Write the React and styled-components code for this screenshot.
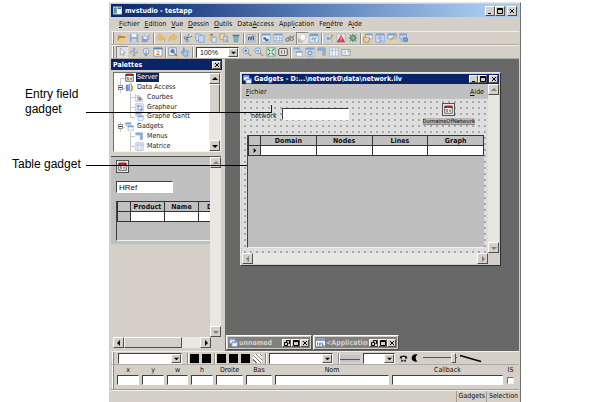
import React from "react";
import styled, { createGlobalStyle, css } from "styled-components";

const face = "#d4d0c8";
const gray = "#c0c0c0";
const navy = "#0a246a";
const uiFont = `"DejaVu Sans Condensed", "DejaVu Sans", sans-serif`;

const GlobalStyle = createGlobalStyle`
  *, *::before, *::after { box-sizing: border-box; }
  body { margin: 0; background: #fff; }
  button, input, select { font: inherit; color: inherit; margin: 0; padding: 0; border-radius: 0; min-width: 0; }
  svg { display: block; flex: none; }
`;

const raised = css`
  border: 1px solid;
  border-color: #fff #505050 #505050 #fff;
`;
const sunken = css`
  border: 1px solid;
  border-color: #707070 #f4f2ec #f4f2ec #707070;
`;

/* ---------- page ---------- */
const Page = styled.div`
  position: relative;
  display: grid;
  grid-template-columns: 109px minmax(0, 1fr) 83px;
  min-height: 100vh;
  font: 7px/10px ${uiFont};
  color: #111;
`;
const Notes = styled.aside`
  display: flex;
  flex-direction: column;
  gap: 40px;
  padding: 87px 0 0 12px;
  font: 12px/15px "Liberation Sans", Arial, sans-serif;
  color: #000;
`;
const Note = styled.p`
  margin: 0;
  padding-left: ${(p) => (p.$indent ? "13px" : "0")};
`;
const Leader = styled.span`
  position: absolute;
  z-index: 5;
  top: ${(p) => p.$top}px;
  left: 86px;
  width: ${(p) => p.$width}px;
  height: ${(p) => (p.$tick ? "8px" : "1px")};
  border-bottom: 1px solid #000;
  border-right: ${(p) => (p.$tick ? "1px solid #222" : "0")};
  pointer-events: none;
`;

/* ---------- application frame ---------- */
const Frame = styled.main`
  display: flex;
  flex-direction: column;
  min-width: 0;
  margin-top: 2px;
  padding: 1px 1px 0 2px;
  background: ${face};
  border-right: 1px solid #707070;
  border-top: 1px solid #e8e6e0;
`;
const TitleBar = styled.header`
  display: flex;
  align-items: center;
  gap: 3px;
  height: 13px;
  padding: 0 2px;
  color: #fff;
  background: linear-gradient(90deg, ${navy}, #5a7fb8 50%, #a6caf0 92%);
  font-weight: bold;
`;
const TitleText = styled.span`
  flex: 1;
  min-width: 0;
  overflow: hidden;
  white-space: nowrap;
`;
const WinButtons = styled.span`
  display: flex;
`;
const WinButton = styled.button`
  display: grid;
  place-items: center;
  width: ${(p) => (p.$big ? "10px" : "9px")};
  height: ${(p) => (p.$big ? "10px" : "8px")};
  margin-left: ${(p) => (p.$split ? "2px" : "0")};
  background: ${face};
  ${raised}
`;
const MenuBar = styled.nav`
  display: flex;
  align-items: center;
  justify-content: ${(p) => (p.$spread ? "space-between" : "flex-start")};
  gap: 5px;
  height: ${(p) => (p.$spread ? "15px" : "14px")};
  padding: ${(p) => (p.$spread ? "0 4px 0 4px" : "0 8px")};
  background: ${(p) => (p.$spread ? gray : face)};
`;
const MenuItem = styled.button`
  border: 0;
  background: none;
  white-space: nowrap;
`;
const Toolbar = styled.div`
  display: flex;
  align-items: center;
  height: 14px;
  padding-left: 5px;
  border-top: 1px solid #f0eee8;
  border-bottom: 1px solid #b0aca4;
  background: linear-gradient(90deg, transparent 1px, #fff 1px, #fff 2px, #8a8780 2px, #8a8780 3px, transparent 3px);
`;
const ToolButton = styled.button`
  display: grid;
  place-items: center;
  width: 12px;
  height: 12px;
  border: 0;
  background: ${(p) => (p.$on ? "#e6e4de" : "none")};
  box-shadow: ${(p) => (p.$on ? "inset 1px 1px #8a8780" : "none")};
`;
const Separator = styled.span`
  flex: none;
  width: 3px;
  height: 11px;
  background: linear-gradient(90deg, transparent 1px, #8f8c85 1px, #8f8c85 2px, #fff 2px);
`;
const ComboBox = styled.span`
  position: relative;
  display: flex;
  flex: none;
  width: ${(p) => p.$width}px;
  height: 11px;
  margin: ${(p) => p.$margin || "0"};
  background: #fff;
  ${sunken}
  border-color: #404040 #fff #fff #404040;
`;
const ComboSelect = styled.select`
  flex: 1;
  appearance: none;
  border: 0;
  background: transparent;
  padding-left: 3px;
  font: 7px/9px "Liberation Sans", Arial, sans-serif;
`;
const ComboArrow = styled.span`
  position: absolute;
  right: 0;
  top: 0;
  bottom: 0;
  width: 10px;
  display: grid;
  place-items: center;
  background: ${face};
  pointer-events: none;
  ${raised}
`;

/* ---------- work area ---------- */
const Work = styled.div`
  flex: 1;
  display: grid;
  grid-template-columns: 111px minmax(0, 1fr);
  column-gap: 3px;
  min-height: 0;
`;
const Dock = styled.section`
  display: flex;
  flex-direction: column;
  min-width: 0;
  padding-bottom: 3px;
`;
const DockTitle = styled.div`
  display: flex;
  align-items: center;
  justify-content: space-between;
  height: 11px;
  padding: 0 1px 0 2px;
  color: #fff;
  background: ${navy};
  font-weight: bold;
`;
const TreeBox = styled.div`
  display: flex;
  height: 80px;
  margin: 2px 1px 4px 2px;
  background: #fff;
  ${sunken}
`;
const Tree = styled.ul`
  flex: 1;
  display: flex;
  flex-direction: column;
  margin: 0;
  padding: 0;
  list-style: none;
`;
const TreeRow = styled.li`
  position: relative;
  flex: 1;
  display: flex;
  align-items: center;
  gap: 2px;
  padding-left: ${(p) => (p.$level ? "21px" : "11px")};
  white-space: nowrap;
  &::before {
    content: "";
    position: absolute;
    left: ${(p) => (p.$level ? "16px" : "6px")};
    width: 5px;
    top: 50%;
    border-top: 1px solid #c8c8c8;
  }
  &::after {
    content: "";
    position: absolute;
    left: ${(p) => (p.$level ? "16px" : "6px")};
    top: ${(p) => (p.$first ? "50%" : "0")};
    bottom: ${(p) => (p.$last ? "50%" : "0")};
    border-left: 1px solid #c8c8c8;
  }
`;
const TreeLabel = styled.span`
  padding: 0 1px;
  line-height: 9px;
  color: ${(p) => (p.$selected ? "#fff" : "#222")};
  background: ${(p) => (p.$selected ? navy : "transparent")};
`;
const Expander = styled.button`
  position: absolute;
  z-index: 1;
  left: 4px;
  width: 5px;
  height: 5px;
  border: 1px solid #909090;
  background: linear-gradient(#fff 1px, #333 1px, #333 2px, #fff 2px);
`;
const ScrollColumn = styled.div`
  display: flex;
  flex-direction: column;
  flex: none;
  width: 11px;
  background: #e9e7e1;
`;
const ScrollRow = styled.div`
  display: flex;
  height: 11px;
  background: #e9e7e1;
`;
const ScrollButton = styled.button`
  display: grid;
  place-items: center;
  flex: none;
  width: 11px;
  height: 11px;
  background: ${face};
  ${raised}
`;
const Thumb = styled.span`
  flex: ${(p) => p.$grow};
  background: ${face};
  ${raised}
`;
const Spacer = styled.span`
  flex: 1;
`;
const Preview = styled.div`
  flex: 1;
  display: flex;
  min-height: 0;
  margin-right: 1px;
  border-top: 1px solid #505050;
`;
const PreviewBody = styled.div`
  flex: 1;
  min-width: 0;
  overflow: hidden;
`;
const PreviewPane = styled.div`
  display: flex;
  flex-direction: column;
  gap: 8px;
  overflow: hidden;
  height: 87px;
  padding: 3px 0 3px 5px;
  background: ${gray};
`;
const GadgetButton = styled.button`
  display: grid;
  place-items: center;
  flex: none;
  width: 13px;
  height: 13px;
  border: 1px solid #505050;
  background: #e4e4e4;
`;
const Field = styled.input`
  flex: none;
  width: ${(p) => (p.$width ? p.$width + "px" : "100%")};
  height: ${(p) => (p.$short ? "10px" : "12px")};
  padding-left: 2px;
  background: #fff;
  border: 1px solid;
  border-color: #404040 #fff #fff #404040;
  font: 8px/9px "Liberation Sans", Arial, sans-serif;
`;
const GridPane = styled.div`
  flex: 1;
  overflow: hidden;
  background: #bebebe;
  border-left: 1px solid #404040;
  border-bottom: 1px solid #f0f0f0;
`;
const Grid = styled.table`
  table-layout: fixed;
  width: ${(p) => (p.$width ? p.$width + "px" : "100%")};
  border-collapse: collapse;
  th, td {
    height: 10px;
    padding: 0;
    border: 1px solid #333;
    line-height: 8px;
  }
  th { background: ${gray}; font-weight: bold; }
  td { background: #fff; }
  th:first-child { width: ${(p) => (p.$width ? "13px" : "12px")}; }
  td:first-child { background: ${gray}; }
  svg { margin: auto; }
`;

/* ---------- child windows ---------- */
const Desktop = styled.section`
  display: flex;
  flex-direction: column;
  justify-content: space-between;
  min-width: 0;
  padding-bottom: 1px;
  background: #686868;
`;
const Child = styled.section`
  display: flex;
  flex-direction: column;
  min-height: 194px;
  margin: 13px 18px 0 15px;
  padding: 1px;
  background: ${face};
  border: 1px solid;
  border-color: #e8e6e0 #303030 #303030 #e8e6e0;
`;
const ChildTitle = styled.header`
  display: flex;
  align-items: center;
  gap: ${(p) => (p.$small ? "1px" : "2px")};
  height: ${(p) => (p.$small ? "11px" : "10px")};
  padding: 0 1px;
  color: ${(p) => (p.$small ? face : "#fff")};
  background: ${(p) => (p.$small ? "#808080" : navy)};
  font-weight: bold;
`;
const ChildBody = styled.div`
  flex: 1;
  display: flex;
`;
const ChildContent = styled.div`
  flex: 1;
  min-width: 0;
  display: flex;
  flex-direction: column;
`;
const Canvas = styled.div`
  flex: 1;
  display: flex;
  flex-direction: column;
  padding: 4px 4px 5px 5px;
  background: #dedede radial-gradient(circle at 3px 3px, #a8a8a8 0 1px, transparent 1px) 0 0 / 6px 6px;
`;
const CanvasForm = styled.div`
  display: flex;
  justify-content: space-between;
  align-items: flex-start;
  height: 32px;
  padding: 0 9px 0 4px;
`;
const FieldLabel = styled.label`
  display: flex;
  align-items: flex-end;
  gap: 5px;
  padding-top: 5px;
  line-height: 8px;
`;
const Domain = styled.figure`
  display: flex;
  flex-direction: column;
  align-items: center;
  gap: 2px;
  margin: 0;
`;
const DomainName = styled.figcaption`
  background: #b8b8b8;
  border-bottom: 1px solid #888;
  font: 6px/6px Roboto, "Liberation Sans", sans-serif;
`;
const HRow = styled.div`
  display: flex;
`;
const Corner = styled.span`
  width: 11px;
  height: 11px;
  background: ${face};
`;
const Minimized = styled.div`
  display: flex;
  gap: 1px;
  padding-left: 1px;
`;
const MinWindow = styled.section`
  width: 86px;
  padding: 1px;
  background: ${face};
  ${raised}
`;

/* ---------- bottom bars ---------- */
const Swatch = styled.button`
  width: 9px;
  height: 9px;
  margin: 0 2px 0 1px;
  border: 0;
  background: ${(p) => (p.$hatch ? "repeating-linear-gradient(45deg, #fff 0 2px, #777 2px 3px)" : "#000")};
`;
const Slider = styled.input`
  appearance: none;
  width: 34px;
  height: 12px;
  margin: 0 2px;
  background: linear-gradient(transparent 5px, #555 5px, #555 6px, transparent 6px);
  &::-webkit-slider-thumb {
    appearance: none;
    width: 5px;
    height: 10px;
    background: ${face};
    border: 1px solid;
    border-color: #fff #505050 #505050 #fff;
  }
`;
const Properties = styled.form`
  display: grid;
  grid-template-columns: 22px 22px 21px 22px 27px 26px minmax(0, 117fr) minmax(0, 114fr) 9px;
  column-gap: 3px;
  height: 25px;
  padding: 1px 4px 0 6px;
  border-bottom: 1px solid #a09c94;
  background: linear-gradient(90deg, transparent 1px, #fff 1px, #fff 2px, #8a8780 2px, #8a8780 3px, transparent 3px);
`;
const Property = styled.label`
  display: flex;
  flex-direction: column;
  align-items: center;
  line-height: 9px;
  white-space: nowrap;
`;
const Check = styled.input`
  appearance: none;
  width: 7px;
  height: 7px;
  margin-top: 2px;
  background: #fff;
  ${sunken}
`;
const Status = styled.footer`
  display: flex;
  justify-content: flex-end;
  height: 12px;
  border-top: 1px solid #f4f2ec;
`;
const StatusCell = styled.span`
  padding: 0 1px 0 2px;
  border-left: 1px solid #a09c94;
  line-height: 11px;
`;

/* ---------- drawings ---------- */
const shapes = {
  open: <><path d="M1 3h4l1 1h4v6H1z" fill="#b88a35" /><path d="M3 6h9l-2 5H1z" fill="#f3cc7a" /></>,
  save: <><path d="M1 1h10v10H1z" fill="#8fa6c8" /><path d="M3 1h6v4H3z" fill="#eef3fa" /><path d="M3 7h6v4H3z" fill="#c9d5e6" /></>,
  saveAll: <><path d="M4 1h7v7H4z" fill="#a9b9d2" /><path d="M1 4h7v7H1z" fill="#8aa2c8" /><path d="M3 4h4v3H3z" fill="#eef3fa" /><path d="M5 2h4" stroke="#fff" /></>,
  undo: <path d="M1 5l4-4v2c4 0 6 2 6 7-1-2-3-3-6-3v2z" fill="#f0c060" stroke="#c09a50" strokeWidth=".5" />,
  redo: <path d="M11 5L7 1v2C3 3 1 5 1 10c1-2 3-3 6-3v2z" fill="#f0c060" stroke="#c09a50" strokeWidth=".5" />,
  cut: <g fill="none" stroke="#53739a"><path d="M7 1L5 7M11 4L5 6" /><circle cx="3" cy="6" r="1.5" /><circle cx="5" cy="9" r="1.5" /></g>,
  copy: <><path d="M1 1h6v8H1z" fill="#d7e4f5" stroke="#86a0c5" /><path d="M4 3h7v8H4z" fill="#c3d7f0" stroke="#86a0c5" /></>,
  paste: <><path d="M2 2h7v8H2z" fill="#e8c078" /><path d="M4 1h3v2H4z" fill="#777" /><path d="M6 5h5v6H6z" fill="#dceafa" stroke="#86a0c5" /></>,
  dup: <><path d="M1 1h6v7H1z" fill="#f5dc9e" stroke="#b59c60" /><path d="M5 4h5v6H5z" fill="#bfd6f2" stroke="#86a0c5" /><path d="M9 8l2 3" stroke="#b87a20" /></>,
  trash: <><path d="M3 3h6l-.5 8h-5z" fill="#5f98ae" /><path d="M2 2h8v2H2z" fill="#467d92" /><path d="M5 4v6M7 4v6" stroke="#a9cdd3" /></>,
  find: <><path d="M1 2h10v9H1z" fill="#d2dbe8" stroke="#9ba7b8" /><path d="M3 9V5h2v4M7 9V4h2v5M5 6h2" stroke="#34455f" fill="none" /></>,
  win: <><path d="M1 1h10v10H1z" fill="#e8f0fb" stroke="#8fabd4" /><path d="M1 1h10v2H1z" fill="#7ba0d4" /><path d="M3 5h3v2h3v3H5V8H3z" fill="#476ca3" /></>,
  grid: <><path d="M1 1h10v10H1z" fill="#edf3fc" stroke="#8fabd4" /><path d="M1 1h10v2H1z" fill="#7ba0d4" /><path d="M4 3v8M8 3v8M1 6h10M1 9h10" stroke="#9ab3d8" /></>,
  glasses: <g fill="none" stroke="#555"><circle cx="3" cy="8" r="2" /><circle cx="8" cy="7" r="2" /><path d="M4 6l3-3M9 5l2-2" /></g>,
  lasso: <><circle cx="7" cy="5" r="4" fill="#fff" stroke="#bbb" /><path d="M2 6v5h5" fill="none" stroke="#8aa" /><path d="M1 11l3-4 1 3z" fill="#d9b86a" /></>,
  form: <><path d="M1 1h10v10H1z" fill="#f0f5fc" stroke="#8fabd4" /><path d="M1 1h10v3H1z" fill="#7ba0d4" /><path d="M3 6h3M3 8h2M7 6v4M9 6H7" stroke="#476ca3" /></>,
  edit: <><path d="M1 2h8v9H1z" fill="#dce7f6" stroke="#9fb5d5" /><path d="M3 4h3v5H3z" fill="#8caad3" /><path d="M6 8l5-6" stroke="#d1a044" strokeWidth="2" /></>,
  warn: <><path d="M1 1h10v10H1z" fill="#dfe8f5" stroke="#a8b5c9" /><path d="M6 2l5 9H1z" fill="#e3343a" /><path d="M6 5v3M6 9v1" stroke="#fff" /></>,
  bug: <><circle cx="6" cy="6" r="3" fill="#7eb79a" stroke="#3e7159" /><path d="M6 1v2M6 9v2M1 6h2M9 6h2M2 2l2 2M8 8l2 2M10 2L8 4M4 8l-2 2" stroke="#3e7159" /></>,
  sheets: <><path d="M3 1h8v6H3z" fill="#fff" stroke="#8ba2be" /><path d="M3 1h8v2H3z" fill="#7ba0d4" /><path d="M1 5h7l-1 6H1z" fill="#ecd596" stroke="#a58c50" /></>,
  book: <><path d="M1 1h10v10H1z" fill="#dbe8fa" stroke="#7fa0d0" /><path d="M1 1h10v2H1z" fill="#7ba0d4" /><path d="M6 3v8M3 5h2M3 7h2M7 5h2M7 7h2M7 9h2" stroke="#6f91c2" /></>,
  note: <><path d="M1 1h10v6H1z" fill="#dbe8fa" stroke="#7fa0d0" /><path d="M1 1h10v2H1z" fill="#7ba0d4" /><path d="M3 8h7v3H3z" fill="#ecd596" /><path d="M4 9l6-6" stroke="#d4a648" strokeWidth="2" /></>,
  gear: <><path d="M1 1h8v6H1z" fill="#dbe8fa" stroke="#7fa0d0" /><path d="M1 1h8v2H1z" fill="#7ba0d4" /><circle cx="8" cy="8" r="2.500" fill="#8ba5c7" stroke="#4b6d9b" /><path d="M2 8l3 3M3 5h4" stroke="#6f91c2" /></>,
  arrow: <path d="M4 1v9l2-2 1.500 3L9 10 7.500 7H10z" fill="#f4f6fa" stroke="#8291ab" strokeWidth=".8" />,
  move: <><path d="M6 1v10M2 8V5h4M10 4v3H6M4 3l2-2 2 2M4 9l2 2 2-2" fill="none" stroke="#7f96b9" /></>,
  rotate: <><circle cx="6" cy="5" r="3.500" fill="#dce6f5" stroke="#7f96b9" /><path d="M6 4v7M4 9l2 2 2-2" stroke="#7189ac" fill="none" /></>,
  number: <><path d="M1 1h10v10H1z" fill="#fff" stroke="#6b87b4" /><path d="M1 1h10v2H1z" fill="#5f83bb" /><path d="M4 5h3v2L4 9h4" fill="none" stroke="#ce7a20" /></>,
  zoomBox: <><path d="M1 1h9v9H1z" fill="#e8f0fb" stroke="#7a91b4" /><circle cx="5.500" cy="5" r="2.500" fill="#537bb9" /><path d="M7 7l4 4" stroke="#b07a2d" strokeWidth="1.500" /></>,
  hand: <path d="M2 5l2 2V1h1v4l1-1 1 1 1-1 1 1h1l-1 6H5L2 7z" fill="#a9c4ed" stroke="#5277ad" strokeWidth=".7" />,
  zoomIn: <><circle cx="4.500" cy="4.500" r="3.500" fill="#d6e5fb" stroke="#7c98c2" /><path d="M3 4.500h3M4.500 3v3" stroke="#274f93" /><path d="M7 7l4 4" stroke="#c38c3a" strokeWidth="1.500" /></>,
  zoomOut: <><circle cx="4.500" cy="4.500" r="3.500" fill="#d6e5fb" stroke="#7c98c2" /><path d="M3 4.500h3" stroke="#274f93" /><path d="M7 7l4 4" stroke="#c38c3a" strokeWidth="1.500" /></>,
  fit: <><path d="M1 1h10v10H1z" fill="#e1f1e8" stroke="#7c9d91" /><path d="M2 2l8 8M10 2l-8 8" stroke="#2b9558" strokeWidth="1.500" /><path d="M5 5h2v2H5z" fill="#fff" /></>,
  oneOne: <><rect x="1" y="2" width="10" height="8" rx="1" fill="#fff" stroke="#222" /><path d="M4 4v4M8 4v4M6 4v1M6 7v1" stroke="#222" /></>,
  cascade: <><path d="M1 1h7v4H1z" fill="#e6eefb" stroke="#9cb3d4" /><path d="M4 5h7v6H4z" fill="#fff" stroke="#9cb3d4" /><path d="M1 1h7v2H1zM4 5h7v2H4z" fill="#7ba0d4" /></>,
  spread: <><path d="M1 1h10v10H1z" fill="#e3ebf8" stroke="#9cb3d4" /><path d="M1 1h10v2H1z" fill="#7ba0d4" /><path d="M6 3v8M2 7h8M3 4l6 6M9 4l-6 6" stroke="#476ca3" /><path d="M5 6h2v2H5z" fill="#fff" /></>,
  chart: <><path d="M1 1v10h10" fill="none" stroke="#a0afc7" /><path d="M3 3h2v7H3zM8 7h2v3H8z" fill="#e39a56" /><path d="M5 5h3v5H5z" fill="#6e92d1" /></>,
  graph: <><path d="M1 1h10v10H1z" fill="#eaf1fb" stroke="#a6b7d0" /><path d="M3 3h3v2H3zM7 8h3v2H7z" fill="#5f86bd" /><path d="M4 5v4h3M6 4h3v4" fill="none" stroke="#7b8ea8" /></>,
  menu: <path d="M1 1h9v9H7V4H1z" fill="#8ab0e0" stroke="#8a98ad" strokeWidth=".7" />,
  matrix: <><path d="M1 1h10v10H1z" fill="#f2f6fc" stroke="#a8b9d4" /><path d="M4 1v10M8 1v10M1 4h10" stroke="#a8b9d4" /></>,
  camera: <><path d="M1 3h10v7H1z" fill="#eef3f8" stroke="#8a9bb3" /><path d="M8 4h2v3H8z" fill="#8fbc91" /><path d="M3 5h3v3H3z" fill="#b8cbe3" /></>,
  data: <><rect x="1" y="2" width="4" height="9" rx="1.500" fill="#6991cd" /><rect x="6" y="1" width="3" height="10" rx="1.500" fill="#d9e4f4" stroke="#5b82bd" /><path d="M10 4v6" stroke="#e6aa42" strokeWidth="2" /></>,
  server: <><path d="M1 2h10v9H1z" fill="#fff" stroke="#333" /><path d="M1 1h10v3H1z" fill="#333" /><path d="M3 1h6v3H3z" fill="#e01818" /><path d="M5 6H3v1.500h2V9H3M7 6l1 3 1-3" fill="none" stroke="#333" strokeWidth=".8" /></>,
  appMark: <><path d="M0 1h12v10H0z" fill="#f4f8f8" stroke="#7ea0a8" /><path d="M1 2h4v8H1z" fill="#4b9a86" /><path d="M6 3h5" stroke="#456ca8" strokeWidth="2" /></>,
  window: <><path d="M1 1h7v6H1z" fill="#fff" stroke="#86a3d0" /><path d="M4 5h7v6H4z" fill="#fff" stroke="#86a3d0" /><path d="M1 1h7v2H1zM4 5h7v2H4z" fill="#7fa6dd" /></>,
  isv: <><path d="M0 1h12v10H0z" fill="#f8fafc" /><path d="M0 1h12v3H0z" fill="#7ba0d4" /><path d="M2 6v4M4 6l1 4 1-4M8 6v4h3M8 8h2" fill="none" stroke="#4065a0" /></>,
  phone: <><path d="M1 5c0-4 10-4 10 0v1H8V4H4v2H1z" fill="#111" /><path d="M3 7l3 2 3-2v4L6 9l-3 2z" fill="#111" /></>,
  moon: <path d="M10 1C4-1 1 3 1 6s3 7 9 5C6 9 6 3 10 1z" fill="#000" />,
};
const Icon = ({ name, size = 10 }) => (
  <svg width={size} height={size} viewBox="0 0 12 12" aria-hidden="true">{shapes[name]}</svg>
);

const arrows = { up: "M0 4h6L3 1z", down: "M0 2h6L3 5z", left: "M4 0v6L1 3z", right: "M2 0v6l3-3z" };
const Arrow = ({ dir, faint, size = 6 }) => (
  <svg width={size} height={size} viewBox="0 0 6 6" aria-hidden="true">
    <path d={arrows[dir]} fill={faint ? "#808080" : "#000"} />
  </svg>
);
const glyphs = {
  min: <path d="M1 5.500h3" />,
  max: <path d="M.5.5h5v5h-5zM.5 1.500h5" />,
  restore: <path d="M2.500 2.500v-2h3v3h-1M.5 2.500h3v3h-3z" />,
  close: <path d="M1 1l4 4M5 1L1 5" />,
};
const Glyph = ({ name }) => (
  <svg width="6" height="6" viewBox="0 0 6 6" fill="none" stroke="#000" aria-hidden="true">{glyphs[name]}</svg>
);

/* ---------- composed parts ---------- */
const Controls = ({ big, docked }) => (
  <WinButtons>
    <WinButton $big={big} aria-label={docked ? "Restore" : "Minimize"}><Glyph name={docked ? "restore" : "min"} /></WinButton>
    <WinButton $big={big} aria-label="Maximize"><Glyph name="max" /></WinButton>
    <WinButton $big={big} $split={!docked} aria-label="Close"><Glyph name="close" /></WinButton>
  </WinButtons>
);

const Mnemonic = ({ text, at = 0 }) => (
  <MenuItem>{text.slice(0, at)}<u>{text[at]}</u>{text.slice(at + 1)}</MenuItem>
);

const Tools = ({ groups, pressed }) =>
  groups.map((group, i) => (
    <React.Fragment key={i}>
      {i > 0 && <Separator />}
      {group.map((name, j) => (
        <ToolButton key={j} $on={name === pressed} aria-label={name}><Icon name={name} /></ToolButton>
      ))}
    </React.Fragment>
  ));

const Combo = ({ width, label, value = "", margin }) => (
  <ComboBox $width={width} $margin={margin}>
    <ComboSelect aria-label={label} defaultValue={value}><option>{value}</option></ComboSelect>
    <ComboArrow><Arrow dir="down" size={5} /></ComboArrow>
  </ComboBox>
);

const menus = [["Fichier", 0], ["Edition", 0], ["Vue", 0], ["Dessin", 0], ["Outils", 0], ["DataAccess", 4], ["Application", 4], ["Fenêtre", 2], ["Aide", 1]];
const mainTools = [
  ["open", "save", "saveAll"], ["undo", "redo"], ["cut", "copy", "paste", "dup", "trash"], ["find"],
  ["win", "grid", "glasses", "lasso", "form"], ["edit", "warn", "bug"], ["sheets", "book", "note", "gear"],
];
const tree = [
  { text: "Server", icon: "server", level: 0, selected: true, first: true },
  { text: "Data Access", icon: "data", level: 0, open: true },
  { text: "Courbes", icon: "chart", level: 1 },
  { text: "Grapheur", icon: "graph", level: 1 },
  { text: "Graphe Gantt", icon: "cascade", level: 1, last: true },
  { text: "Gadgets", icon: "cascade", level: 0, open: true },
  { text: "Menus", icon: "menu", level: 1 },
  { text: "Matrice", icon: "matrix", level: 1 },
];

const DataGrid = ({ columns, width, marker }) => (
  <Grid $width={width}>
    <thead><tr><th aria-label="Row" />{columns.map((c) => <th key={c} scope="col">{c}</th>)}</tr></thead>
    <tbody><tr><td>{marker && <Arrow dir="right" size={5} />}</td>{columns.map((c) => <td key={c} />)}</tr></tbody>
  </Grid>
);

const Palettes = () => (
  <Dock>
    <DockTitle>Palettes<WinButton aria-label="Close palettes"><Glyph name="close" /></WinButton></DockTitle>
    <TreeBox>
      <Tree>
        {tree.map((n) => (
          <TreeRow key={n.text} $level={n.level} $first={n.first} $last={n.last}>
            {n.open && <Expander aria-label={`Collapse ${n.text}`} />}
            <Icon name={n.icon} size={9} />
            <TreeLabel $selected={n.selected}>{n.text}</TreeLabel>
          </TreeRow>
        ))}
      </Tree>
      <ScrollColumn>
        <ScrollButton aria-label="Up"><Arrow dir="up" /></ScrollButton>
        <Thumb $grow={1} /><Spacer />
        <ScrollButton aria-label="Down"><Arrow dir="down" /></ScrollButton>
      </ScrollColumn>
    </TreeBox>
    <Preview>
      <PreviewBody>
        <PreviewPane>
          <GadgetButton aria-label="Server"><Icon name="server" size={9} /></GadgetButton>
          <Field $width={57} aria-label="HRef" defaultValue="HRef" />
          <GridPane><DataGrid width={116} columns={["Product", "Name", "Date"]} /></GridPane>
        </PreviewPane>
      </PreviewBody>
      <ScrollColumn>
        <ScrollButton aria-label="Up"><Arrow dir="up" faint /></ScrollButton>
        <Spacer />
        <ScrollButton aria-label="Down"><Arrow dir="down" faint /></ScrollButton>
      </ScrollColumn>
    </Preview>
    <HRow>
      <ScrollRow as={HScroll} />
      <Corner />
    </HRow>
  </Dock>
);

const HScrollTrack = styled(ScrollRow)`
  flex: 1;
  margin-left: 2px;
`;
function HScroll() {
  return (
    <HScrollTrack>
      <ScrollButton aria-label="Left"><Arrow dir="left" /></ScrollButton>
      <Thumb $grow={3} /><Spacer />
      <ScrollButton aria-label="Right"><Arrow dir="right" /></ScrollButton>
    </HScrollTrack>
  );
}

const GadgetsWindow = () => (
  <Child>
    <ChildTitle>
      <Icon name="window" size={9} />
      <TitleText>Gadgets - D:...\network0\data\network.ilv</TitleText>
      <Controls />
    </ChildTitle>
    <ChildBody>
      <ChildContent>
        <MenuBar $spread><Mnemonic text="Fichier" /><Mnemonic text="Aide" /></MenuBar>
        <Canvas>
          <CanvasForm>
            <FieldLabel>network<Field $width={67} /></FieldLabel>
            <Domain>
              <GadgetButton aria-label="DomainsOfNetwork"><Icon name="server" size={9} /></GadgetButton>
              <DomainName>DomainsOfNetwork</DomainName>
            </Domain>
          </CanvasForm>
          <GridPane><DataGrid marker columns={["Domain", "Nodes", "Lines", "Graph"]} /></GridPane>
        </Canvas>
        <ScrollRow>
          <ScrollButton aria-label="Left"><Arrow dir="left" faint /></ScrollButton>
          <Spacer />
          <ScrollButton aria-label="Right"><Arrow dir="right" faint /></ScrollButton>
        </ScrollRow>
      </ChildContent>
      <ScrollColumn>
        <ScrollButton aria-label="Up"><Arrow dir="up" faint /></ScrollButton>
        <Spacer />
        <ScrollButton aria-label="Down"><Arrow dir="down" faint /></ScrollButton>
        <Corner />
      </ScrollColumn>
    </ChildBody>
  </Child>
);

export default function App() {
  return (
    <Page>
      <GlobalStyle />
      <Notes>
        <Note $indent>Entry field<br />gadget</Note>
        <Note>Table gadget</Note>
      </Notes>
      <Leader $top={105} $width={186} $tick />
      <Leader $top={165} $width={161} />
      <Frame>
        <TitleBar>
          <Icon name="appMark" size={9} />
          <TitleText>mvstudio - testapp</TitleText>
          <Controls big />
        </TitleBar>
        <MenuBar>{menus.map(([text, at]) => <Mnemonic key={text} text={text} at={at} />)}</MenuBar>
        <Toolbar><Tools groups={mainTools} pressed="lasso" /></Toolbar>
        <Toolbar>
          <Tools groups={[["arrow", "move", "rotate", "number"], ["zoomBox", "hand"]]} pressed="arrow" />
          <Separator />
          <Combo width={43} label="Zoom" value="100%" margin="0 2px" />
          <Tools groups={[["zoomIn", "zoomOut", "fit", "oneOne"], ["cascade", "spread", "menu", "matrix", "camera"]]} />
        </Toolbar>
        <Work>
          <Palettes />
          <Desktop>
            <GadgetsWindow />
            <Minimized>
              <MinWindow>
                <ChildTitle $small><Icon name="window" size={9} /><TitleText>unnamed</TitleText><Controls docked /></ChildTitle>
              </MinWindow>
              <MinWindow>
                <ChildTitle $small><Icon name="isv" size={9} /><TitleText>&lt;Application</TitleText><Controls docked /></ChildTitle>
              </MinWindow>
            </Minimized>
          </Desktop>
        </Work>
        <Toolbar>
          <Combo width={64} label="Layer" margin="0 4px 0 2px" />
          <Separator />
          <Swatch aria-label="Foreground" /><Swatch aria-label="Background" />
          <Separator />
          <Swatch aria-label="Line" /><Swatch aria-label="Fill" /><Swatch aria-label="Text" /><Swatch $hatch aria-label="Pattern" />
          <Separator />
          <Combo width={64} label="Font" margin="0 4px 0 2px" />
          <Separator />
          <svg width="20" height="9" viewBox="0 0 20 9"><path d="M0 1h20v7H0z" fill="#c3c3c8" /><path d="M0 5.500h20" stroke="#555" /></svg>
          <Combo width={32} label="Line width" margin="0 2px 0 3px" />
          <ToolButton aria-label="Arrow"><Icon name="phone" size={9} /></ToolButton>
          <ToolButton aria-label="Arc"><Icon name="moon" size={8} /></ToolButton>
          <Slider type="range" aria-label="Opacity" min="0" max="100" defaultValue="95" />
          <svg width="23" height="9" viewBox="0 0 23 9"><path d="M1 1.500l21 6" stroke="#000" strokeWidth="1.500" /></svg>
        </Toolbar>
        <Properties>
          {["x", "y", "w", "h", "Droite", "Bas", "Nom", "Callback"].map((name) => (
            <Property key={name}>{name}<Field $short name={name} /></Property>
          ))}
          <Property>IS<Check type="checkbox" /></Property>
        </Properties>
        <Status><StatusCell>Gadgets</StatusCell><StatusCell>Selection</StatusCell></Status>
      </Frame>
    </Page>
  );
}
